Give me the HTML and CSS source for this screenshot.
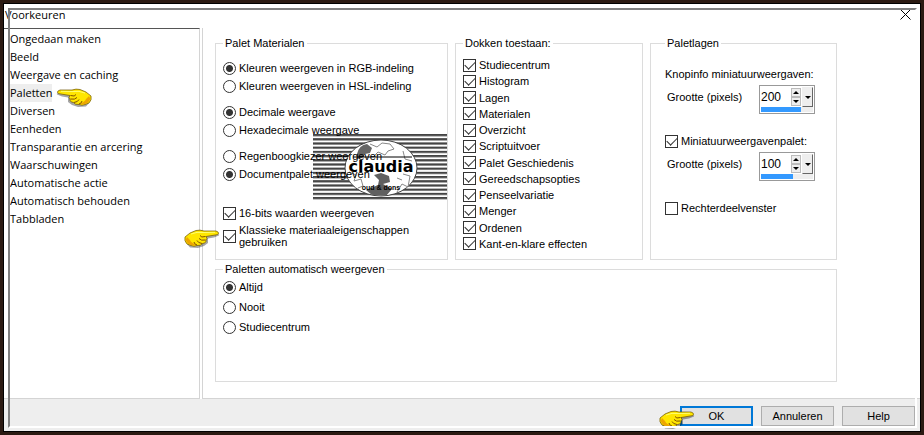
FILE: index.html
```html
<!DOCTYPE html>
<html lang="nl">
<head>
  <meta charset="UTF-8" />
  <meta name="viewport" content="width=device-width, initial-scale=1.0"/>
  <title>Voorkeuren</title>
  <link rel="stylesheet" href="styles.css">
</head>
<body>
  <svg width="0" height="0" class="defs" aria-hidden="true">
    <symbol id="hand" viewBox="0 0 36 20">
      <path d="M3 9 L8 5 L20 4 L31 4 Q35 5 34 6.500 L29 8.500 L23 9.500 L23 14 L19 17 L13 19 L5 18.500 L2 15 Z" fill="#000" opacity=".35" transform="translate(1 1)"/>
      <path d="M1 9 L6 5 L12 2.500 Q16 1.500 20 3 L32 3 Q35 4 34.500 5.500 Q34 7 30 7.200 L22 8.500 Q24 10.500 22 12 Q22.500 15 18.500 15.500 Q17 18 13 17.500 Q10 19 7 17.500 L3 16 Q0 13 1 9Z" fill="#ffe600" stroke="#6b5200" stroke-width=".7"/>
      <path d="M1.500 12 Q4 17 9 17.500 L13 17 Q7 15 6 12 L3 9Z" fill="#eda500"/>
      <path d="M21.500 8.500 Q17 10 16 7.500 M21.500 12 Q17 13 15 10.500 M18 15.500 Q14 15 13 12.500 M13 17 Q10 16 10 14" fill="none" stroke="#805000" stroke-width="1"/>
      <path d="M7 6 Q13 3.500 19 4.500 L31 4.300" fill="none" stroke="#ffff70" stroke-width="1"/>
    </symbol>
  </svg>

  <form class="window">
    <header class="titlebar">
      <h1>Voorkeuren</h1>
      <button type="button" class="close" aria-label="Sluiten">
        <svg width="11" height="11" viewBox="0 0 11 11"><path d="M.5 .5 L10.500 10.500 M10.500 .5 L.5 10.500" stroke="#000" stroke-width="1"/></svg>
      </button>
    </header>

    <div class="content">
      <nav class="sidebar">
        <a href="#">Ongedaan maken</a>
        <a href="#">Beeld</a>
        <a href="#">Weergave en caching</a>
        <a href="#" class="active">Paletten<svg class="hand hand-left"><use href="#hand"/></svg></a>
        <a href="#">Diversen</a>
        <a href="#">Eenheden</a>
        <a href="#">Transparantie en arcering</a>
        <a href="#">Waarschuwingen</a>
        <a href="#">Automatische actie</a>
        <a href="#">Automatisch behouden</a>
        <a href="#">Tabbladen</a>
      </nav>

      <main class="panel">
        <fieldset class="materials">
          <legend>Palet Materialen</legend>
          <svg class="watermark" viewBox="0 0 134 66" aria-hidden="true">
            <defs>
              <pattern id="stripes" width="4.200" height="4.200" patternUnits="userSpaceOnUse">
                <rect width="4.200" height="4.200" fill="#fff"/>
                <rect width="4.200" height="2.200" fill="#444"/>
              </pattern>
              <clipPath id="oval"><ellipse cx="68" cy="34" rx="36" ry="28"/></clipPath>
            </defs>
            <rect width="134" height="66" fill="url(#stripes)"/>
            <ellipse cx="68" cy="34" rx="36" ry="28" fill="#fff" stroke="#444"/>
            <g clip-path="url(#oval)">
              <path d="M44 20 Q46 11 54 10 L59 14 L57 19 L52 20 L49 24 L44 25Z" fill="#666"/>
              <path d="M61 41 L68 39 L76 42 L77 48 L70 50 L79 55 L73 62 L59 61 L53 56 L65 51 L66 46Z" fill="#606060"/>
              <path d="M57 10 L64 13 L69 9 L77 10 L81 15 L75 17 L72 21 L65 18 L61 22 M90 40 L97 42 L95 53 L89 50 L84 58 M84 44 L89 46 M36 38 L43 41 L41 47 L48 45 L50 52 L45 54 M90 17 L92 25 L99 27" fill="none" stroke="#888"/>
            </g>
            <path d="M40 23 H99" stroke="#000"/>
            <text x="68" y="38" class="mark-name">claudia</text>
            <text x="68" y="56" class="mark-sub">oud &amp; dons</text>
          </svg>
          <div class="pair">
            <label><input type="radio" name="model" checked>Kleuren weergeven in RGB-indeling</label>
            <label><input type="radio" name="model">Kleuren weergeven in HSL-indeling</label>
          </div>
          <div class="pair">
            <label><input type="radio" name="notation" checked>Decimale weergave</label>
            <label><input type="radio" name="notation">Hexadecimale weergave</label>
          </div>
          <div class="pair">
            <label><input type="radio" name="picker">Regenboogkiezer weergeven</label>
            <label><input type="radio" name="picker" checked>Documentpalet weergeven</label>
          </div>
          <div class="checks">
            <label><input type="checkbox" checked>16-bits waarden weergeven</label>
            <label class="two-line"><input type="checkbox" checked><span>Klassieke materiaaleigenschappen<br>gebruiken</span><svg class="hand hand-classic"><use href="#hand"/></svg></label>
          </div>
        </fieldset>

        <fieldset class="docks">
          <legend>Dokken toestaan:</legend>
          <label><input type="checkbox" checked>Studiecentrum</label>
          <label><input type="checkbox" checked>Histogram</label>
          <label><input type="checkbox" checked>Lagen</label>
          <label><input type="checkbox" checked>Materialen</label>
          <label><input type="checkbox" checked>Overzicht</label>
          <label><input type="checkbox" checked>Scriptuitvoer</label>
          <label><input type="checkbox" checked>Palet Geschiedenis</label>
          <label><input type="checkbox" checked>Gereedschapsopties</label>
          <label><input type="checkbox" checked>Penseelvariatie</label>
          <label><input type="checkbox" checked>Menger</label>
          <label><input type="checkbox" checked>Ordenen</label>
          <label><input type="checkbox" checked>Kant-en-klare effecten</label>
        </fieldset>

        <fieldset class="layers">
          <legend>Paletlagen</legend>
          <p>Knopinfo miniatuurweergaven:</p>
          <div class="size-row">
            <label for="tipSize">Grootte (pixels)</label>
            <div class="spinner">
              <input type="text" id="tipSize" value="200">
              <div class="steps">
                <button type="button" class="up" aria-label="Hoger"></button>
                <button type="button" class="down" aria-label="Lager"></button>
              </div>
              <button type="button" class="drop" aria-label="Schuifregelaar"></button>
              <div class="track"><div class="fill" style="width: 76%"></div></div>
            </div>
          </div>
          <label class="thumbs"><input type="checkbox" checked>Miniatuurweergavenpalet:</label>
          <div class="size-row">
            <label for="thumbSize">Grootte (pixels)</label>
            <div class="spinner">
              <input type="text" id="thumbSize" value="100">
              <div class="steps">
                <button type="button" class="up" aria-label="Hoger"></button>
                <button type="button" class="down" aria-label="Lager"></button>
              </div>
              <button type="button" class="drop" aria-label="Schuifregelaar"></button>
              <div class="track"><div class="fill" style="width: 61%"></div></div>
            </div>
          </div>
          <label class="right-pane"><input type="checkbox">Rechterdeelvenster</label>
        </fieldset>

        <fieldset class="auto">
          <legend>Paletten automatisch weergeven</legend>
          <label><input type="radio" name="auto" checked>Altijd</label>
          <label><input type="radio" name="auto">Nooit</label>
          <label><input type="radio" name="auto">Studiecentrum</label>
        </fieldset>
      </main>
    </div>

    <footer class="buttons">
      <button type="button" class="ok">OK<svg class="hand hand-ok"><use href="#hand"/></svg></button>
      <button type="button">Annuleren</button>
      <button type="button">Help</button>
    </footer>
  </form>
</body>
</html>
```
FILE: styles.css
```css
* {
  box-sizing: border-box;
}
body {
  margin: 0;
  background: #2b1a12;
  font-family: "Liberation Sans", Arial, sans-serif;
  font-size: 11px;
  color: #000;
  display: flex;
  min-height: 100vh;
  padding: 3px;
}
.defs {
  position: absolute;
}
.window {
  position: relative;
  flex: 1;
  display: flex;
  flex-direction: column;
  background: #fff;
  border: 1px solid #000;
}
/* sunken bevel that runs over the whole dialog */
.window::after {
  content: "";
  position: absolute;
  inset: 4px 3px 3px 4px;
  border: 2px solid #fff;
  border-top-color: #808080;
  border-left-color: #808080;
  pointer-events: none;
}
.titlebar {
  display: flex;
  justify-content: space-between;
  align-items: center;
  height: 24px;
  padding: 0 9px 4px 1px;
}
.titlebar h1 {
  margin: 0;
  font-family: "Open Sans", sans-serif;
  font-size: 11px;
  font-weight: normal;
}
.close {
  display: flex;
  padding: 0;
  border: none;
  background: none;
}
.content {
  flex: 1;
  display: flex;
  gap: 2px;
}
.sidebar {
  width: 196px;
  display: flex;
  flex-direction: column;
  align-items: flex-start;
  padding: 1px 0 0 6px;
  border-top: 1px solid #555;
  border-right: 1px solid #d4d4d4;
  border-bottom: 1px solid #d4d4d4;
  font-family: "Open Sans", sans-serif;
}
.sidebar a {
  position: relative;
  line-height: 18px;
  color: #000;
  text-decoration: none;
}
.sidebar .active {
  background: #eee;
}
.hand {
  position: absolute;
  width: 36px;
  height: 20px;
}
.hand-left {
  left: 46px;
  top: 3px;
  transform: scaleX(-1);
}
.hand-classic {
  left: -39px;
  top: 4px;
}
.hand-ok {
  left: -23px;
  top: 1px;
}
.panel {
  flex: 1;
  display: grid;
  grid-template-columns: 233fr 188fr 187fr;
  grid-template-rows: 224px 1fr;
  column-gap: 7px;
  row-gap: 2px;
  padding: 8px 83px 16px 12px;
  border-left: 1px solid #d4d4d4;
  border-bottom: 1px solid #d4d4d4;
}
fieldset {
  position: relative;
  display: flex;
  flex-direction: column;
  min-width: 0;
  margin: 0;
  padding: 7px;
  border: 1px solid #dcdcdc;
}
legend {
  padding: 0 2px;
  line-height: 14px;
}
label {
  display: flex;
  align-items: center;
  gap: 3px;
  white-space: nowrap;
}
input[type="radio"],
input[type="checkbox"] {
  appearance: none;
  flex: none;
  width: 13px;
  height: 13px;
  margin: 0;
  border: 1px solid #333;
  background: #fff;
}
input[type="radio"] {
  border-radius: 50%;
}
input[type="radio"]:checked {
  background: radial-gradient(circle, #333 3px, #fff 4px);
}
input[type="checkbox"]:checked::before {
  content: "";
  display: block;
  width: 9px;
  height: 5px;
  margin: 1px;
  border-left: 1px solid #333;
  border-bottom: 1px solid #333;
  transform: rotate(-45deg);
}
/* the input is a block box, so keep the tick's margin inside it */
input[type="checkbox"] {
  display: flow-root;
}
.materials {
  padding-top: 9px;
}
.pair {
  position: relative;
  margin-bottom: 8px;
}
.pair label,
.checks label {
  height: 18px;
}
.checks {
  margin-top: 13px;
}
.checks .two-line {
  position: relative;
  height: 24px;
  margin-top: 2px;
  line-height: 12px;
}
.watermark {
  position: absolute;
  right: 0;
  top: 84px;
  width: 134px;
  height: 66px;
}
.mark-name {
  font-family: "DejaVu Sans", sans-serif;
  font-size: 16px;
  font-weight: bold;
  text-anchor: middle;
}
.mark-sub {
  font-size: 7px;
  font-weight: bold;
  text-anchor: middle;
}
.docks {
  justify-content: space-between;
}
.docks label {
  height: 16px;
}
.layers {
  padding: 16px 21px 7px 14px;
}
.layers p {
  margin: 0 0 3px;
  line-height: 16px;
  white-space: nowrap;
}
.size-row {
  display: flex;
  justify-content: space-between;
  padding-left: 2px;
}
.size-row label {
  height: 24px;
}
.thumbs {
  height: 16px;
  margin: 19px 0 3px;
}
.right-pane {
  height: 16px;
  margin-top: 19px;
}
.spinner {
  display: grid;
  grid-template-columns: 1fr 10px 11px;
  column-gap: 1px;
  width: 56px;
  height: 29px;
  padding: 1px;
  border: 1px solid #999;
}
.spinner input {
  width: 100%;
  min-width: 0;
  height: 20px;
  padding: 0;
  border: none;
  background: none;
  font: inherit;
  font-size: 12px;
}
.steps {
  display: grid;
  grid-template-rows: 1fr 1fr;
  padding: 1px 0;
}
.spinner button {
  display: flex;
  align-items: center;
  justify-content: center;
  padding: 0;
  border: 1px solid #bbb;
  background: #eee;
}
.spinner button::before {
  content: "";
  border: 3px solid transparent;
  border-top: 3px solid #000;
  border-bottom: none;
}
.spinner .up::before {
  border-top: none;
  border-bottom: 3px solid #000;
}
.spinner .drop {
  border-color: #eee #666 #666 #eee;
}
.track {
  grid-column: 1 / -1;
  height: 5px;
  background: #eee;
}
.fill {
  height: 100%;
  background: #3399ff;
}
.auto {
  grid-column: 1 / -1;
  padding-top: 1px;
}
.auto label {
  height: 20px;
}
.buttons {
  display: flex;
  justify-content: flex-end;
  gap: 8px;
  padding: 7px 5px 5px;
  background: #eee;
}
.buttons button {
  position: relative;
  width: 73px;
  height: 20px;
  padding: 0;
  border: 1px solid #adadad;
  background: #e1e1e1;
  font: inherit;
}
.buttons .ok {
  border: 2px solid #0078d7;
}
```
